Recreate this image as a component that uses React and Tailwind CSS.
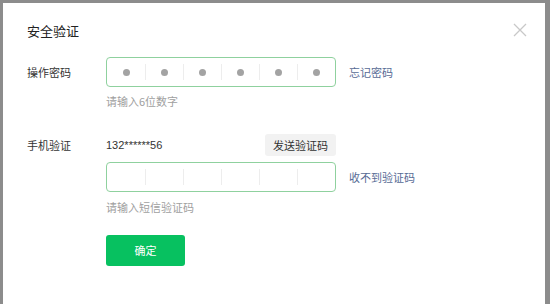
import React from 'react'

const font = { fontFamily: '"Noto Sans CJK SC", "Liberation Sans", sans-serif' }

const CodeBox = ({ filled }) => (
  <div className="flex h-[30px] w-[230px] rounded-[4px] border border-[#8fd19e] bg-white">
    {[0, 1, 2, 3, 4, 5].map(i => (
      <div key={i} className="flex flex-1 items-center justify-center py-[6px]">
        <div className={`flex h-full w-full items-center justify-center ${i > 0 ? 'border-l border-[#ededed]' : ''}`}>
          {filled && <span className="block h-[7px] w-[7px] rounded-full bg-[#a3a3a3]" />}
        </div>
      </div>
    ))}
  </div>
)

export default function App() {
  return (
    <div className="h-[304px] w-[550px] bg-[#8c8c8c] pl-[3px] pr-[5px] pt-[3px]" style={font}>
      <div className="relative h-full w-full bg-white text-[11px] text-[#333]">
        {/* close */}
        <svg className="absolute right-[18px] top-[20px]" width="14" height="14" viewBox="0 0 14 14">
          <path d="M1 1 L13 13 M13 1 L1 13" stroke="#c8c8c8" strokeWidth="1.3" fill="none" />
        </svg>

        <div className="pl-[24px] pt-[19px]">
          <div className="text-[13px] leading-[18px] text-[#222]">安全验证</div>

          <div className="mt-[17px] flex items-center">
            <div className="w-[79px]">操作密码</div>
            <CodeBox filled />
            <a className="ml-[13px] text-[#576b95]">忘记密码</a>
          </div>
          <div className="ml-[79px] mt-[6px] text-[11px] leading-[16px] text-[#a0a0a0]">请输入6位数字</div>

          <div className="mt-[25px] flex items-center">
            <div className="w-[79px]">手机验证</div>
            <div className="flex w-[230px] items-center justify-between">
              <span className="text-[11px]" style={{ fontFamily: '"Liberation Sans", sans-serif' }}>132******56</span>
              <button className="h-[22px] rounded-[3px] bg-[#f2f2f2] px-[8px] text-[11px] text-[#333]">发送验证码</button>
            </div>
          </div>
          <div className="mt-[6px] flex items-center">
            <div className="w-[79px]" />
            <CodeBox />
            <a className="ml-[13px] text-[#576b95]">收不到验证码</a>
          </div>
          <div className="ml-[79px] mt-[7px] text-[11px] leading-[16px] text-[#a0a0a0]">请输入短信验证码</div>

          <div className="ml-[79px] mt-[20px]">
            <button className="h-[31px] w-[79px] rounded-[3px] bg-[#07c160] text-[11px] text-white">确定</button>
          </div>
        </div>
      </div>
    </div>
  )
}
